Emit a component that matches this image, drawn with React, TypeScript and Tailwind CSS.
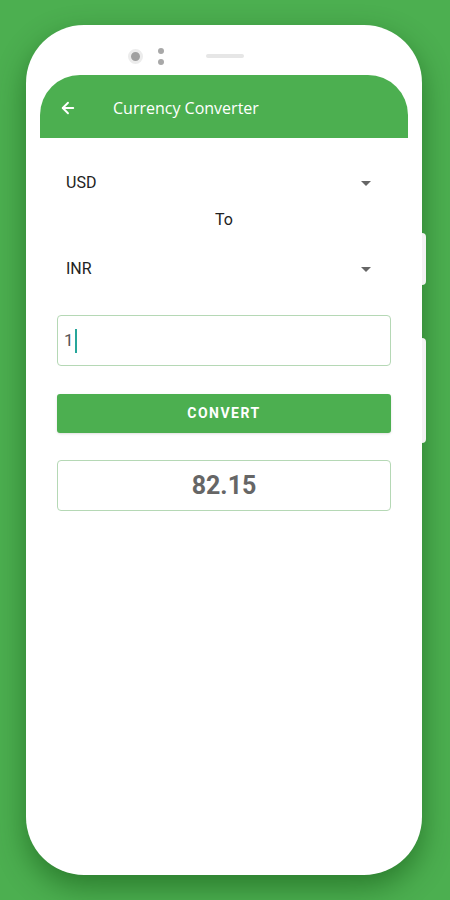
import { ArrowLeft } from 'lucide-react';

function Dropdown({ value }: { value: string }) {
  return (
    <div className="flex items-center justify-between h-[40px] pl-[26px] pr-[37px]">
      <span className="text-[16px] text-[#222]">{value}</span>
      <span className="w-0 h-0 border-l-[5px] border-r-[5px] border-t-[5px] border-l-transparent border-r-transparent border-t-[#666]" />
    </div>
  );
}

export default function App() {
  return (
    <div className="w-[450px] h-[900px] bg-[#4caf50] pt-[25px] pl-[26px] font-['Roboto',sans-serif] overflow-hidden">
      <div className="relative w-[396px] h-[850px] bg-white rounded-[58px] shadow-[0_12px_30px_rgba(0,60,0,0.45)]">
        {/* side buttons */}
        <div className="absolute right-[-4px] top-[208px] w-[4px] h-[52px] bg-[#f3f3f3] rounded-r" />
        <div className="absolute right-[-4px] top-[313px] w-[4px] h-[105px] bg-[#f3f3f3] rounded-r" />

        {/* camera / speaker */}
        <div className="h-[50px] flex items-center pt-[12px]">
          <div className="ml-[102px] w-[15px] h-[15px] rounded-full bg-[#a0a0a0] border-[3px] border-[#ececec]" />
          <div className="ml-[15px] flex flex-col gap-[5px]">
            <div className="w-[6px] h-[6px] rounded-full bg-[#a8a8a8]" />
            <div className="w-[6px] h-[6px] rounded-full bg-[#a8a8a8]" />
          </div>
          <div className="ml-[42px] w-[38px] h-[4px] rounded-full bg-[#e6e6e6]" />
        </div>

        <div className="mx-[14px]">
          <div className="h-[63px] bg-[#4caf50] rounded-t-[40px] flex items-center pt-[2px]">
            <ArrowLeft className="ml-[19px] text-white" size={18} strokeWidth={2.5} />
            <span className="ml-[36px] text-white text-[16px] font-['Open_Sans',sans-serif]">Currency Converter</span>
          </div>

          <div className="pt-[25px]">
            <Dropdown value="USD" />
            <div className="text-center text-[16px] text-[#222] h-[34px] leading-[34px]">To</div>
            <div className="mt-[12px]">
              <Dropdown value="INR" />
            </div>

            <div className="mt-[26px] mx-[17px] h-[51px] border border-[#b5d8b5] rounded-[4px] flex items-center px-[6px]">
              <span className="text-[17px] text-[#555]">1</span>
              <span className="ml-[1px] w-[2px] h-[24px] bg-[#26a69a]" />
            </div>

            <div className="mt-[28px] mx-[17px] h-[39px] bg-[#4caf50] rounded-[3px] flex items-center justify-center shadow-sm">
              <span className="text-white text-[14px] font-bold tracking-[1.5px]">CONVERT</span>
            </div>

            <div className="mt-[27px] mx-[17px] h-[51px] border border-[#b5d8b5] rounded-[4px] flex items-center justify-center">
              <span className="text-[25px] font-bold text-[#666]">82.15</span>
            </div>
          </div>
        </div>
      </div>
    </div>
  );
}
